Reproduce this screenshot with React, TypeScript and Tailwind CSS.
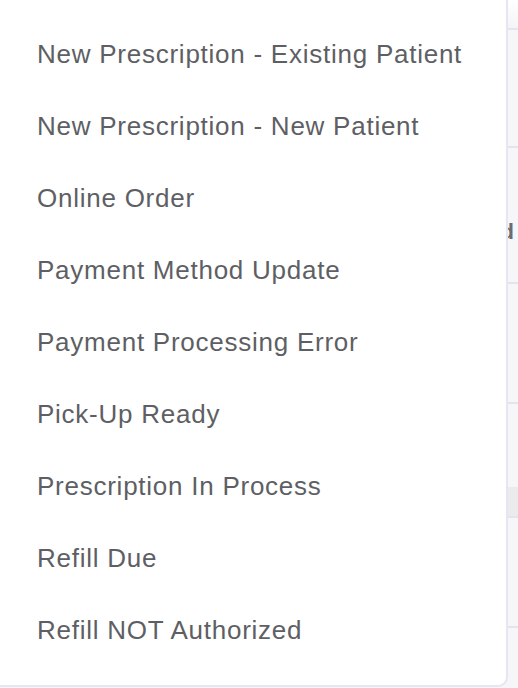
const items = [
  'New Prescription - Existing Patient',
  'New Prescription - New Patient',
  'Online Order',
  'Payment Method Update',
  'Payment Processing Error',
  'Pick-Up Ready',
  'Prescription In Process',
  'Refill Due',
  'Refill NOT Authorized',
];

export default function App() {
  return (
    <div className="relative h-[688px] w-[518px] overflow-hidden bg-[#f6f6f8] font-['Liberation_Sans',Arial,sans-serif]">
      {/* page behind the menu */}
      <div className="flex flex-col">
        <div className="h-[30px] bg-gradient-to-b from-white to-[#f4f4f6] border-b-2 border-[#e3e5ee]" />
        <div className="h-[118px] border-b-2 border-[#e3e5ee]" />
        <div className="h-[136px] flex items-center justify-end pr-[4px] border-b-2 border-[#e3e5ee]">
          <span className="text-[22px] font-bold text-[#6b6c72] mt-[32px]">Add</span>
        </div>
        <div className="h-[120px] border-b-2 border-[#e3e5ee]" />
        <div className="h-[83px]" />
        <div className="h-[31px] bg-[#ebebee] border-b-2 border-[#e3e5ee]" />
        <div className="h-[110px] border-b-2 border-[#e3e5ee]" />
        <div className="h-[60px]" />
      </div>

      {/* dropdown menu */}
      <div className="absolute left-0 top-0 w-[508px] h-[687px] bg-white border-r-2 border-b-2 border-[#e4e6f1] rounded-br-[10px] pt-[18px]">
        {items.map(label => (
          <div key={label} className="h-[72px] flex items-center pl-[37px] text-[26px] tracking-[0.75px] text-[#5e5f64]">
            {label}
          </div>
        ))}
      </div>
    </div>
  );
}
